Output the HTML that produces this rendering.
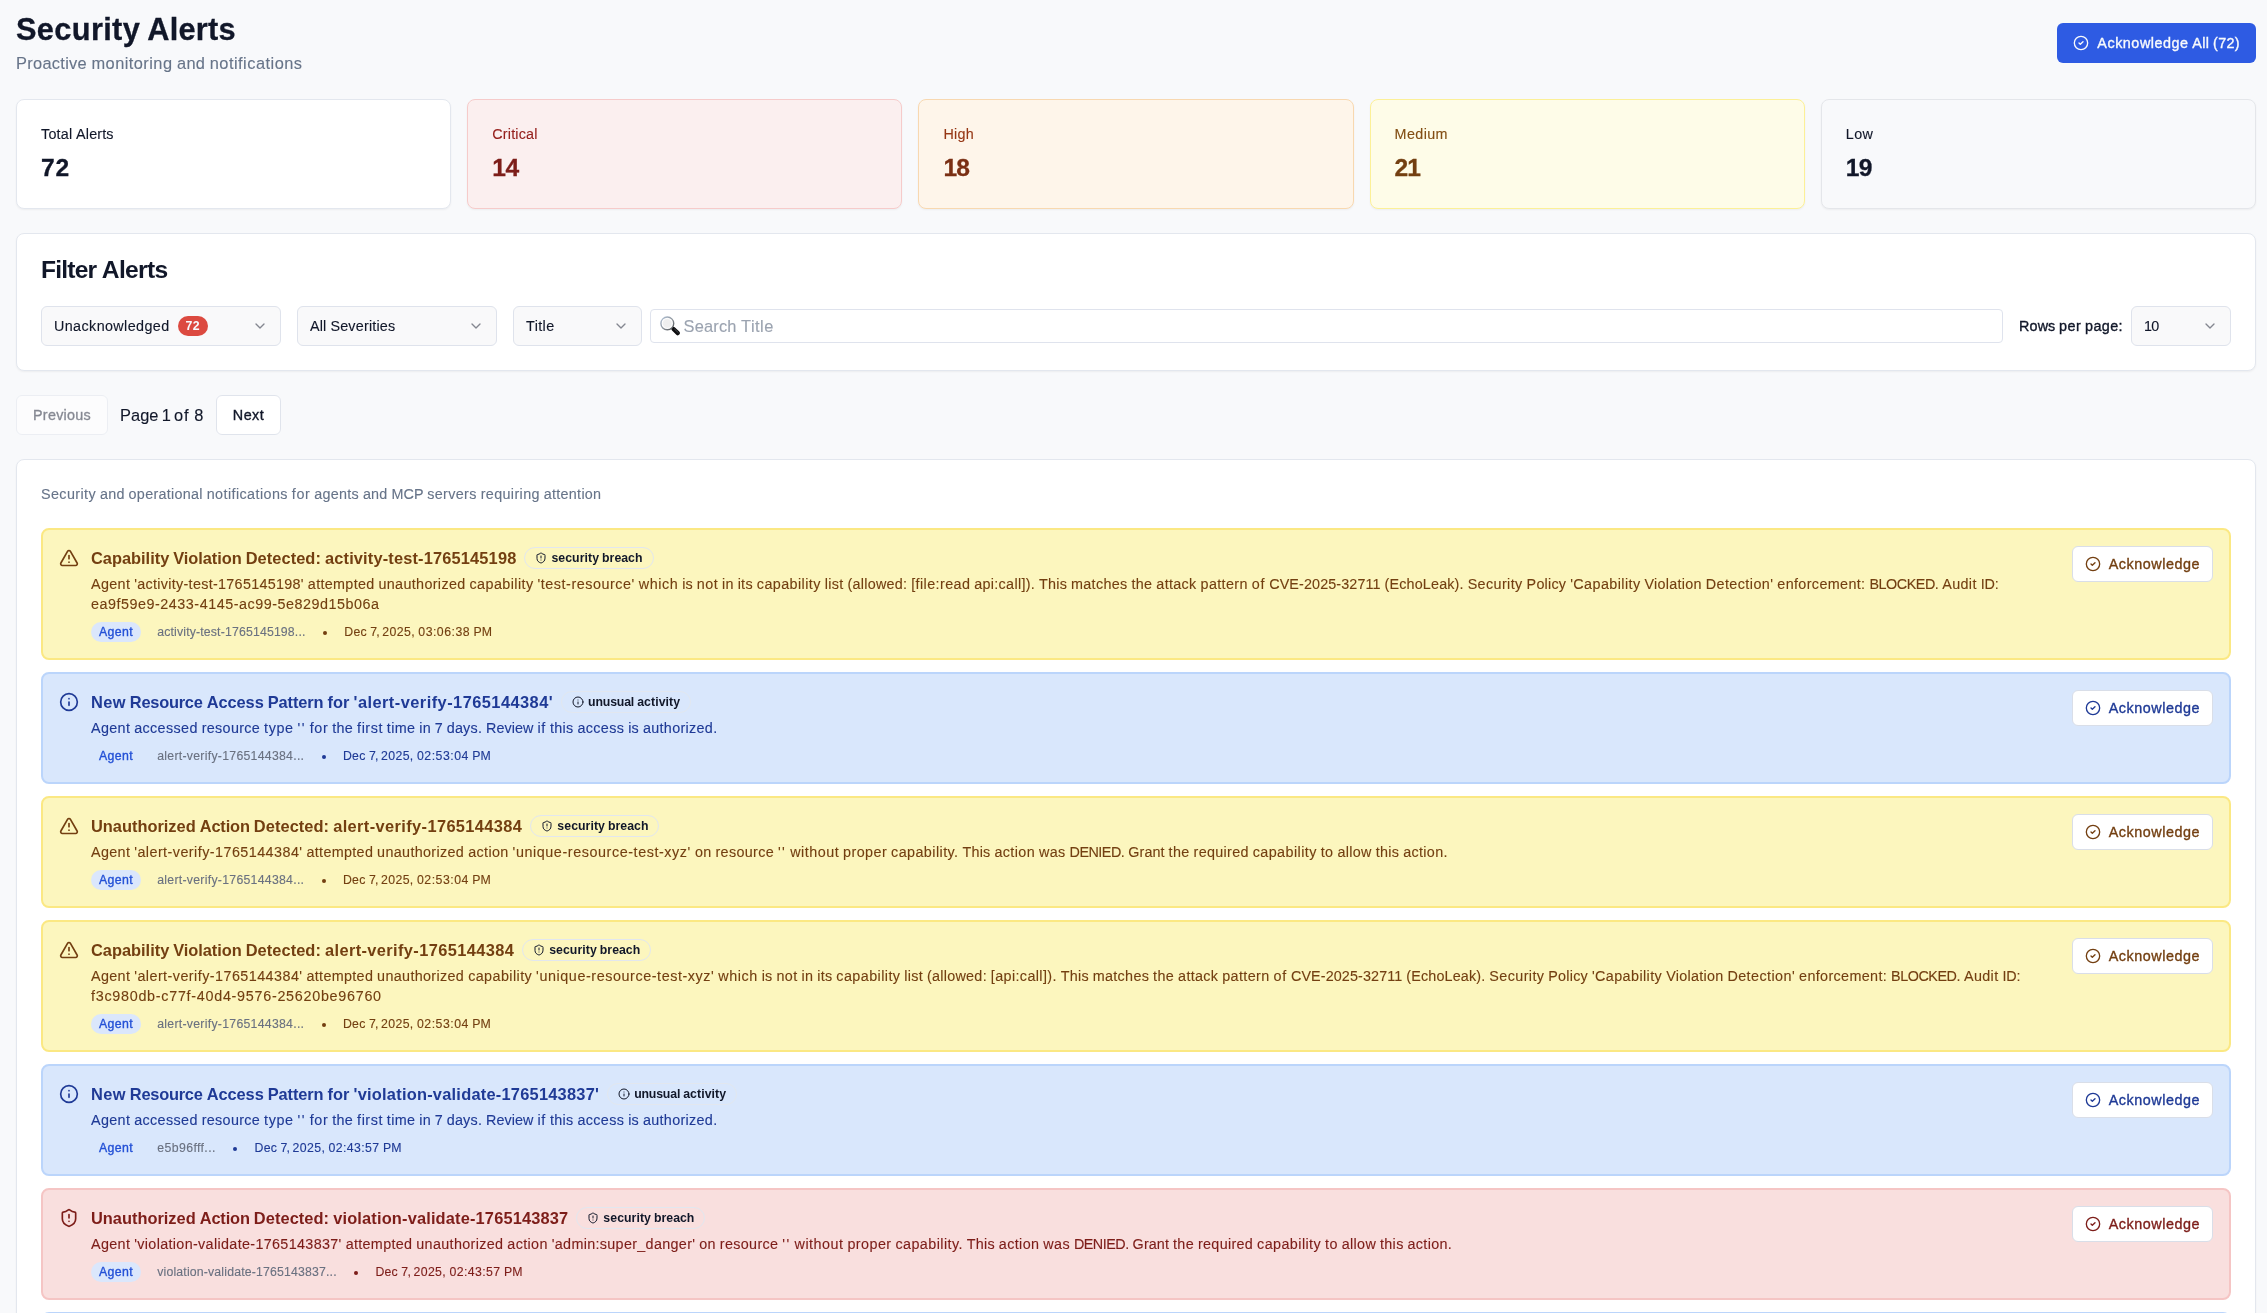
<!DOCTYPE html><html><head><meta charset="utf-8"><title>Security Alerts</title><style>
*{box-sizing:border-box;margin:0;padding:0}
html,body{width:2267px;height:1313px;overflow:hidden}
body{background:#f8f9fb;font-family:"Liberation Sans", sans-serif;color:#111729;font-size:14.35px;line-height:20px;-webkit-font-smoothing:antialiased}
.tx{white-space:pre}
.dy1{position:relative;top:1px}.dy2{position:relative;top:2px}.dym1{position:relative;top:-1px}
.dotw{margin-right:16px;line-height:16px;white-space:nowrap}
.dotw i{display:inline-block;width:3.88px;height:3.88px;border-radius:50%;background:currentColor;vertical-align:1.15px;margin:0 1.435px}
body{-webkit-text-stroke:0.12px currentColor}
.m5{-webkit-text-stroke:0.35px currentColor}
h1,.stat .nm{-webkit-text-stroke:0.3px currentColor}.ftitle,.bdg72,.al .ttl,.tag{-webkit-text-stroke:0.0px currentColor}
.page{position:absolute;left:16px;top:11px;width:2240px;will-change:transform}
.header{display:flex;justify-content:space-between;align-items:center;height:64px}
h1{font-size:30.75px;line-height:36px;font-weight:700;color:#111729}
.sub{font-size:16.4px;line-height:24px;color:#677489;margin-top:4px}
.btnp{display:flex;align-items:center;height:40px;padding:0 16px;border-radius:6px;background:#2e5be3;color:#f8fafc;font-size:14.35px;font-weight:400}
.btnp svg{margin-right:8px}
.stats{display:grid;grid-template-columns:repeat(5,1fr);gap:16px;margin-top:24px}
.card{background:#fff;border:1px solid #e3e7ee;border-radius:8px;box-shadow:0 1px 2px 0 rgba(0,0,0,0.05)}
.stat{padding:24px;height:110px}
.stat .lb{font-size:14.35px;line-height:20px;font-weight:400;display:block}
.stat .nm{font-size:24.6px;line-height:32px;font-weight:700;display:block;margin-top:8px}
.s-crit{background:#fbefef;border-color:#f6cbca}.s-crit .lb{color:#951f1c}.s-crit .nm{color:#7d1d19}
.s-high{background:#fef5ea;border-color:#f8d8b0}.s-high .lb{color:#963716}.s-high .nm{color:#7a2f14}
.s-med{background:#fefce8;border-color:#fcf097}.s-med .lb{color:#834e14}.s-med .nm{color:#733f11}
.s-low{background:#f8f9fb;border-color:#e4e6ea}
.filter{margin-top:24px;height:138px;padding:24px;position:relative}
.ftitle{font-size:24.6px;line-height:24px;font-weight:700;letter-spacing:0;display:block}
.frow{position:absolute;left:24px;top:72px;right:24px;height:40px;display:flex;align-items:center}
.sel{height:40px;border:1px solid #dfe3ec;border-radius:6px;background:#f9f9fa;display:flex;align-items:center;justify-content:space-between;padding:0 12px;font-size:14.35px;line-height:20px}
.sel svg{opacity:.5}
.sel .l{display:flex;align-items:center}
.bdg72{margin-left:8px;height:20px;padding:0 8px;border-radius:10px;background:#dc4a40;color:#f8fafc;font-size:12.3px;line-height:20px;font-weight:700}
.search{height:34px;border:1px solid #dfe3ed;border-radius:4px;background:#fff;margin-left:8px;flex:1;display:flex;align-items:center;padding-left:9px;font-size:16.4px;color:#9ba3b0}
.rpp{margin-left:16px;font-weight:400;margin-right:8px}
.pager{margin-top:24px;height:40px;display:flex;align-items:center}
.btno{height:40px;padding:0 16px;border:1px solid #e0e4ec;border-radius:6px;background:#fff;display:flex;align-items:center;font-size:14.35px;font-weight:400}
.btno.dis{opacity:.5}
.pg{font-size:16.4px;line-height:24px;margin:0 12px}
.list{margin-top:24px;padding:24px}
.ldesc{display:block;color:#677489;font-size:14.35px;line-height:20px}
.alerts{margin-top:24px}
.al{position:relative;border:2px solid;border-radius:8px;padding:16px;display:flex;margin-bottom:12px}
.al .ic{flex:none;width:20px;height:20px;margin-top:2px;margin-right:12px}
.al .body{flex:1;min-width:0}
.al .trow{display:flex;align-items:center;height:24px}
.al .ttl{font-size:16.4px;line-height:24px;font-weight:700}
.tag{margin-left:8px;height:22px;border:1px solid #e2e7ef;border-radius:11px;padding:0 10px;display:flex;align-items:center;font-size:12.3px;line-height:16px;font-weight:700;color:#111729}
.tag svg{margin-right:4px}
.al .desc{margin-top:4px;font-size:14.35px;line-height:20px}
.al .desc .tx{display:block}
.al .meta{margin-top:8px;height:20px;display:flex;align-items:center;font-size:12.3px;line-height:16px}
.al .agent{height:20px;padding:0 8px;border-radius:10px;font-weight:400;color:#2350d6;display:flex;align-items:center;margin-right:16px}
.al .agent.bg{background:#dbe7fc}
.al .aid{color:#6a7180;margin-right:16px}
.al .dot{margin-right:16px}
.ack{flex:none;margin-left:16px;height:36px;padding:0 12px;border:1px solid #d9dee8;border-radius:6px;background:#fff;display:flex;align-items:center;font-size:14.35px;font-weight:400}
.ack svg{margin-right:8px}
.a-y{background:#fcf6be;border-color:#fbe883;color:#733f11}
.a-b{background:#d9e7fc;border-color:#bbd5fb;color:#1f3a96}
.a-r{background:#f9dfde;border-color:#f5c5c4;color:#7d1d19}
</style></head><body><div class="page">
<div class="header"><div><h1><span class="tx dy1" id="t1"><span style="letter-spacing:0.346px;word-spacing:-1.799px">Security </span><span style="letter-spacing:0.268px">Alerts</span></span></h1><p class="sub"><span class="tx" id="t2"><span style="letter-spacing:0.293px;word-spacing:-0.340px">Proactive </span><span style="letter-spacing:0.450px;word-spacing:-0.528px">monitoring </span><span style="letter-spacing:0.297px;word-spacing:-0.360px">and </span><span style="letter-spacing:0.483px">notifications</span></span></p></div><div class="btnp m5"><svg class="" width="16" height="16" viewBox="0 0 24 24" fill="none" stroke="currentColor" stroke-width="2" stroke-linecap="round" stroke-linejoin="round" ><circle cx="12" cy="12" r="10"/><path d="m9 12 2 2 4-4"/></svg><span class="tx" id="t3"><span style="letter-spacing:0.541px;word-spacing:-0.806px">Acknowledge </span><span style="letter-spacing:0.349px;word-spacing:-0.615px">All </span><span style="letter-spacing:0.363px">(72)</span></span></div></div>
<div class="stats"><div class="card stat "><span class="tx lb" id="t4"><span style="letter-spacing:0.209px;word-spacing:-0.443px">Total </span><span style="letter-spacing:0.133px">Alerts</span></span><span class="tx nm" id="t5" style="letter-spacing:0.859px">72</span></div><div class="card stat s-crit"><span class="tx lb" id="t6" style="letter-spacing:0.209px">Critical</span><span class="tx nm" id="t7" style="letter-spacing:-0.391px">14</span></div><div class="card stat s-high"><span class="tx lb" id="t8" style="letter-spacing:0.293px">High</span><span class="tx nm" id="t9" style="letter-spacing:-0.695px">18</span></div><div class="card stat s-med"><span class="tx lb" id="t10" style="letter-spacing:0.385px">Medium</span><span class="tx nm" id="t11" style="letter-spacing:-0.945px">21</span></div><div class="card stat s-low"><span class="tx lb" id="t12" style="letter-spacing:0.396px">Low</span><span class="tx nm" id="t13" style="letter-spacing:-0.711px">19</span></div></div>
<div class="card filter"><span class="tx ftitle" id="t14"><span style="letter-spacing:-0.792px;word-spacing:-0.615px">Filter </span><span style="letter-spacing:-0.656px">Alerts</span></span><div class="frow"><div class="sel" style="width:240px"><span class="l"><span class="tx" id="t15" style="letter-spacing:0.394px">Unacknowledged</span><span class="bdg72"><span class="tx" id="t16" style="letter-spacing:0.352px">72</span></span></span><svg class="" width="16" height="16" viewBox="0 0 24 24" fill="none" stroke="currentColor" stroke-width="2" stroke-linecap="round" stroke-linejoin="round" ><path d="m6 9 6 6 6-6"/></svg></div><div class="sel" style="width:200px;margin-left:16px"><span class="tx" id="t17"><span style="letter-spacing:0.167px;word-spacing:-0.230px">All </span><span style="letter-spacing:0.206px">Severities</span></span><svg class="" width="16" height="16" viewBox="0 0 24 24" fill="none" stroke="currentColor" stroke-width="2" stroke-linecap="round" stroke-linejoin="round" ><path d="m6 9 6 6 6-6"/></svg></div><div class="sel" style="width:128.5px;margin-left:16px"><span class="tx" id="t18" style="letter-spacing:0.397px">Title</span><svg class="" width="16" height="16" viewBox="0 0 24 24" fill="none" stroke="currentColor" stroke-width="2" stroke-linecap="round" stroke-linejoin="round" ><path d="m6 9 6 6 6-6"/></svg></div><div class="search"><svg width="20" height="20" viewBox="0 0 20 20" style="margin-right:4px;flex:none;overflow:visible"><defs><linearGradient id="mgr" x1="0" y1="0" x2="1" y2="1"><stop offset="0" stop-color="#b4c4d8"/><stop offset="0.55" stop-color="#8b9299"/><stop offset="1" stop-color="#4a4d50"/></linearGradient><radialGradient id="mgl" cx="0.5" cy="0.5" r="0.5"><stop offset="0" stop-color="#eeeeee"/><stop offset="0.62" stop-color="#f0f0f0"/><stop offset="0.8" stop-color="#ffffff"/><stop offset="1" stop-color="#ffffff"/></radialGradient></defs><line x1="13.5" y1="13.0" x2="17.8" y2="17.1" stroke="#0d0d0f" stroke-width="4.3" stroke-linecap="round"/><line x1="14.6" y1="13.2" x2="18.2" y2="16.6" stroke="#4a4f55" stroke-width="0.9" stroke-linecap="round"/><circle cx="7.3" cy="7.4" r="6.4" fill="url(#mgl)" stroke="url(#mgr)" stroke-width="1.4"/></svg><span class="tx" id="t19"><span style="letter-spacing:0.193px;word-spacing:-0.256px">Search </span><span style="letter-spacing:0.456px">Title</span></span></div><span class="rpp m5"><span class="tx" id="t20"><span style="letter-spacing:0.098px;word-spacing:-0.379px">Rows </span><span style="letter-spacing:0.526px;word-spacing:-0.792px">per </span><span style="letter-spacing:0.400px">page:</span></span></span><div class="sel" style="width:100px"><span class="tx" id="t21" style="letter-spacing:-0.719px">10</span><svg class="" width="16" height="16" viewBox="0 0 24 24" fill="none" stroke="currentColor" stroke-width="2" stroke-linecap="round" stroke-linejoin="round" ><path d="m6 9 6 6 6-6"/></svg></div></div></div>
<div class="pager"><div class="btno dis m5"><span class="tx" id="t22" style="letter-spacing:0.283px">Previous</span></div><span class="pg"><span class="tx" id="t23"><span style="letter-spacing:0.016px;word-spacing:-0.078px">Page </span><span style="margin-left:-1.304px;letter-spacing:-1.304px;word-spacing:1.243px">1 </span><span style="letter-spacing:0.930px;word-spacing:-1.008px">of </span><span style="margin-left:0.391px;letter-spacing:0.391px">8</span></span></span><div class="btno m5"><span class="tx" id="t24" style="letter-spacing:0.457px">Next</span></div></div>
<div class="card list"><span class="tx ldesc" id="t25"><span style="letter-spacing:0.402px;word-spacing:-0.465px">Security </span><span style="letter-spacing:0.260px;word-spacing:-0.323px">and </span><span style="letter-spacing:0.290px;word-spacing:-0.353px">operational </span><span style="letter-spacing:0.421px;word-spacing:-0.484px">notifications </span><span style="letter-spacing:0.568px;word-spacing:-0.631px">for </span><span style="letter-spacing:0.276px;word-spacing:-0.339px">agents </span><span style="letter-spacing:0.260px;word-spacing:-0.323px">and </span><span style="letter-spacing:0.068px;word-spacing:-0.131px">MCP </span><span style="letter-spacing:0.350px;word-spacing:-0.413px">servers </span><span style="letter-spacing:0.373px;word-spacing:-0.435px">requiring </span><span style="letter-spacing:0.288px">attention</span></span><div class="alerts">
<div class="al a-y"><svg class="ic" width="20" height="20" viewBox="0 0 24 24" fill="none" stroke="currentColor" stroke-width="2" stroke-linecap="round" stroke-linejoin="round" ><path d="m21.73 18-8-14a2 2 0 0 0-3.48 0l-8 14A2 2 0 0 0 4 21h16a2 2 0 0 0 1.73-3"/><path d="M12 9v4"/><path d="M12 17h.01"/></svg><div class="body"><div class="trow"><span class="tx ttl" id="t28"><span style="letter-spacing:-0.006px;word-spacing:-0.540px">Capability </span><span style="letter-spacing:-0.066px;word-spacing:-0.466px">Violation </span><span style="letter-spacing:0.073px;word-spacing:-0.619px">Detected: </span><span style="letter-spacing:0.156px">activity-test-1765145198</span></span><span class="tag"><svg class="" width="12" height="12" viewBox="0 0 24 24" fill="none" stroke="currentColor" stroke-width="2" stroke-linecap="round" stroke-linejoin="round" ><path d="M20 13c0 5-3.5 7.500-7.660 8.950a1 1 0 0 1-.670-.010C7.500 20.500 4 18 4 13V6a1 1 0 0 1 1-1c2 0 4.500-1.200 6.240-2.720a1.170 1.170 0 0 1 1.520 0C14.510 3.810 17 5 19 5a1 1 0 0 1 1 1z"/><path d="M12 8v4"/><path d="M12 16h.01"/></svg><span class="tx" id="t29"><span style="letter-spacing:0.055px;word-spacing:-0.461px">security </span><span style="letter-spacing:0.018px">breach</span></span></span></div><div class="desc"><span class="tx" id="t26"><span style="letter-spacing:0.356px;word-spacing:-0.419px">Agent </span><span style="letter-spacing:0.306px;word-spacing:-0.369px">'activity-test-1765145198' </span><span style="letter-spacing:0.327px;word-spacing:-0.405px">attempted </span><span style="letter-spacing:0.347px;word-spacing:-0.410px">unauthorized </span><span style="letter-spacing:0.423px;word-spacing:-0.485px">capability </span><span style="letter-spacing:0.548px;word-spacing:-0.611px">'test-resource' </span><span style="letter-spacing:0.547px;word-spacing:-0.610px">which </span><span style="letter-spacing:0.219px;word-spacing:-0.297px">is </span><span style="letter-spacing:0.432px;word-spacing:-0.495px">not </span><span style="letter-spacing:0.258px;word-spacing:-0.321px">in </span><span style="letter-spacing:0.292px;word-spacing:-0.355px">its </span><span style="letter-spacing:0.424px;word-spacing:-0.486px">capability </span><span style="letter-spacing:0.305px;word-spacing:-0.368px">list </span><span style="letter-spacing:0.274px;word-spacing:-0.337px">(allowed: </span><span style="letter-spacing:0.403px;word-spacing:-0.465px">[file:read </span><span style="letter-spacing:0.317px;word-spacing:-0.381px">api:call]). </span><span style="letter-spacing:0.250px;word-spacing:-0.312px">This </span><span style="letter-spacing:0.312px;word-spacing:-0.375px">matches </span><span style="letter-spacing:0.365px;word-spacing:-0.427px">the </span><span style="letter-spacing:0.336px;word-spacing:-0.399px">attack </span><span style="letter-spacing:0.362px;word-spacing:-0.424px">pattern </span><span style="letter-spacing:0.805px;word-spacing:-0.867px">of </span><span style="letter-spacing:0.121px;word-spacing:-0.183px">CVE-2025-32711 </span><span style="letter-spacing:0.161px;word-spacing:-0.223px">(EchoLeak). </span><span style="letter-spacing:0.404px;word-spacing:-0.467px">Security </span><span style="letter-spacing:0.229px;word-spacing:-0.292px">Policy </span><span style="letter-spacing:0.419px;word-spacing:-0.481px">'Capability </span><span style="letter-spacing:0.285px;word-spacing:-0.347px">Violation </span><span style="letter-spacing:0.438px;word-spacing:-0.500px">Detection' </span><span style="letter-spacing:0.367px;word-spacing:-0.430px">enforcement: </span><span style="letter-spacing:-0.447px;word-spacing:0.385px">BLOCKED. </span><span style="letter-spacing:0.359px;word-spacing:-0.422px">Audit </span><span style="letter-spacing:-0.146px">ID:</span></span><span class="tx" id="t27" style="letter-spacing:0.526px">ea9f59e9-2433-4145-ac99-5e829d15b06a</span></div><div class="meta"><span class="agent m5 bg"><span class="tx" id="t30" style="letter-spacing:0.412px">Agent</span></span><span class="tx aid" id="t31" style="letter-spacing:0.153px">activity-test-1765145198...</span><span class="dotw"><i></i></span><span class="tx dt" id="t33"><span style="letter-spacing:0.214px;word-spacing:-0.276px">Dec </span><span style="letter-spacing:-0.750px;word-spacing:0.703px">7, </span><span style="letter-spacing:0.375px;word-spacing:-0.438px">2025, </span><span style="letter-spacing:0.484px;word-spacing:-0.516px">03:06:38 </span><span style="letter-spacing:0.031px">PM</span></span></div></div><div class="ack m5"><svg class="" width="16" height="16" viewBox="0 0 24 24" fill="none" stroke="currentColor" stroke-width="2" stroke-linecap="round" stroke-linejoin="round" ><circle cx="12" cy="12" r="10"/><path d="m9 12 2 2 4-4"/></svg><span class="tx" id="t34" style="letter-spacing:0.541px">Acknowledge</span></div></div>
<div class="al a-b"><svg class="ic" width="20" height="20" viewBox="0 0 24 24" fill="none" stroke="currentColor" stroke-width="2" stroke-linecap="round" stroke-linejoin="round" ><circle cx="12" cy="12" r="10"/><path d="M12 16v-4"/><path d="M12 8h.01"/></svg><div class="body"><div class="trow"><span class="tx ttl" id="t36"><span style="letter-spacing:0.365px;word-spacing:-0.896px">New </span><span style="letter-spacing:-0.238px;word-spacing:-0.293px">Resource </span><span style="letter-spacing:-0.054px;word-spacing:-0.492px">Access </span><span style="letter-spacing:-0.100px;word-spacing:-0.431px">Pattern </span><span style="letter-spacing:0.026px;word-spacing:-0.542px">for </span><span style="letter-spacing:0.454px">'alert-verify-1765144384'</span></span><span class="tag"><svg class="" width="12" height="12" viewBox="0 0 24 24" fill="none" stroke="currentColor" stroke-width="2" stroke-linecap="round" stroke-linejoin="round" ><circle cx="12" cy="12" r="10"/><path d="M12 16v-4"/><path d="M12 8h.01"/></svg><span class="tx" id="t37"><span style="letter-spacing:-0.161px;word-spacing:-0.246px">unusual </span><span style="letter-spacing:0.076px">activity</span></span></span></div><div class="desc"><span class="tx" id="t35"><span style="letter-spacing:0.356px;word-spacing:-0.419px">Agent </span><span style="letter-spacing:0.367px;word-spacing:-0.430px">accessed </span><span style="letter-spacing:0.334px;word-spacing:-0.397px">resource </span><span style="letter-spacing:0.586px;word-spacing:-0.649px">type </span><span style="letter-spacing:1.461px;word-spacing:-1.524px">'' </span><span style="letter-spacing:0.568px;word-spacing:-0.630px">for </span><span style="letter-spacing:0.359px;word-spacing:-0.422px">the </span><span style="letter-spacing:0.544px;word-spacing:-0.606px">first </span><span style="letter-spacing:0.328px;word-spacing:-0.391px">time </span><span style="letter-spacing:0.250px;word-spacing:-0.313px">in </span><span style="letter-spacing:-0.046px;word-spacing:-0.015px">7 </span><span style="letter-spacing:0.247px;word-spacing:-0.310px">days. </span><span style="letter-spacing:0.052px;word-spacing:-0.114px">Review </span><span style="letter-spacing:0.703px;word-spacing:-0.781px">if </span><span style="letter-spacing:0.332px;word-spacing:-0.395px">this </span><span style="letter-spacing:0.359px;word-spacing:-0.421px">access </span><span style="letter-spacing:0.219px;word-spacing:-0.297px">is </span><span style="letter-spacing:0.329px">authorized.</span></span></div><div class="meta"><span class="agent m5"><span class="tx" id="t38" style="letter-spacing:0.412px">Agent</span></span><span class="tx aid" id="t39" style="letter-spacing:0.267px">alert-verify-1765144384...</span><span class="dotw"><i></i></span><span class="tx dt" id="t41"><span style="letter-spacing:0.214px;word-spacing:-0.276px">Dec </span><span style="letter-spacing:-0.750px;word-spacing:0.703px">7, </span><span style="letter-spacing:0.375px;word-spacing:-0.438px">2025, </span><span style="letter-spacing:0.496px;word-spacing:-0.559px">02:53:04 </span><span style="letter-spacing:0.031px">PM</span></span></div></div><div class="ack m5"><svg class="" width="16" height="16" viewBox="0 0 24 24" fill="none" stroke="currentColor" stroke-width="2" stroke-linecap="round" stroke-linejoin="round" ><circle cx="12" cy="12" r="10"/><path d="m9 12 2 2 4-4"/></svg><span class="tx" id="t42" style="letter-spacing:0.541px">Acknowledge</span></div></div>
<div class="al a-y"><svg class="ic" width="20" height="20" viewBox="0 0 24 24" fill="none" stroke="currentColor" stroke-width="2" stroke-linecap="round" stroke-linejoin="round" ><path d="m21.73 18-8-14a2 2 0 0 0-3.48 0l-8 14A2 2 0 0 0 4 21h16a2 2 0 0 0 1.73-3"/><path d="M12 9v4"/><path d="M12 17h.01"/></svg><div class="body"><div class="trow"><span class="tx ttl" id="t44"><span style="letter-spacing:-0.004px;word-spacing:-0.527px">Unauthorized </span><span style="letter-spacing:-0.151px;word-spacing:-0.381px">Action </span><span style="letter-spacing:0.073px;word-spacing:-0.619px">Detected: </span><span style="letter-spacing:0.380px">alert-verify-1765144384</span></span><span class="tag"><svg class="" width="12" height="12" viewBox="0 0 24 24" fill="none" stroke="currentColor" stroke-width="2" stroke-linecap="round" stroke-linejoin="round" ><path d="M20 13c0 5-3.5 7.500-7.660 8.950a1 1 0 0 1-.670-.010C7.500 20.500 4 18 4 13V6a1 1 0 0 1 1-1c2 0 4.500-1.200 6.240-2.720a1.170 1.170 0 0 1 1.520 0C14.510 3.810 17 5 19 5a1 1 0 0 1 1 1z"/><path d="M12 8v4"/><path d="M12 16h.01"/></svg><span class="tx" id="t45"><span style="letter-spacing:0.055px;word-spacing:-0.461px">security </span><span style="letter-spacing:0.018px">breach</span></span></span></div><div class="desc"><span class="tx" id="t43"><span style="letter-spacing:0.356px;word-spacing:-0.419px">Agent </span><span style="letter-spacing:0.455px;word-spacing:-0.518px">'alert-verify-1765144384' </span><span style="letter-spacing:0.327px;word-spacing:-0.405px">attempted </span><span style="letter-spacing:0.345px;word-spacing:-0.408px">unauthorized </span><span style="letter-spacing:0.372px;word-spacing:-0.435px">action </span><span style="letter-spacing:0.579px;word-spacing:-0.642px">'unique-resource-test-xyz' </span><span style="letter-spacing:0.352px;word-spacing:-0.414px">on </span><span style="letter-spacing:0.334px;word-spacing:-0.397px">resource </span><span style="letter-spacing:1.461px;word-spacing:-1.524px">'' </span><span style="letter-spacing:0.504px;word-spacing:-0.567px">without </span><span style="letter-spacing:0.425px;word-spacing:-0.487px">proper </span><span style="letter-spacing:0.431px;word-spacing:-0.495px">capability. </span><span style="letter-spacing:0.250px;word-spacing:-0.313px">This </span><span style="letter-spacing:0.372px;word-spacing:-0.435px">action </span><span style="letter-spacing:0.401px;word-spacing:-0.464px">was </span><span style="letter-spacing:-0.487px;word-spacing:0.424px">DENIED. </span><span style="letter-spacing:0.112px;word-spacing:-0.175px">Grant </span><span style="letter-spacing:0.365px;word-spacing:-0.427px">the </span><span style="letter-spacing:0.324px;word-spacing:-0.387px">required </span><span style="letter-spacing:0.423px;word-spacing:-0.470px">capability </span><span style="letter-spacing:0.438px;word-spacing:-0.500px">to </span><span style="letter-spacing:0.315px;word-spacing:-0.378px">allow </span><span style="letter-spacing:0.328px;word-spacing:-0.391px">this </span><span style="letter-spacing:0.326px">action.</span></span></div><div class="meta"><span class="agent m5 bg"><span class="tx" id="t46" style="letter-spacing:0.412px">Agent</span></span><span class="tx aid" id="t47" style="letter-spacing:0.267px">alert-verify-1765144384...</span><span class="dotw"><i></i></span><span class="tx dt" id="t49"><span style="letter-spacing:0.214px;word-spacing:-0.276px">Dec </span><span style="letter-spacing:-0.750px;word-spacing:0.703px">7, </span><span style="letter-spacing:0.375px;word-spacing:-0.438px">2025, </span><span style="letter-spacing:0.496px;word-spacing:-0.559px">02:53:04 </span><span style="letter-spacing:0.031px">PM</span></span></div></div><div class="ack m5"><svg class="" width="16" height="16" viewBox="0 0 24 24" fill="none" stroke="currentColor" stroke-width="2" stroke-linecap="round" stroke-linejoin="round" ><circle cx="12" cy="12" r="10"/><path d="m9 12 2 2 4-4"/></svg><span class="tx" id="t50" style="letter-spacing:0.541px">Acknowledge</span></div></div>
<div class="al a-y"><svg class="ic" width="20" height="20" viewBox="0 0 24 24" fill="none" stroke="currentColor" stroke-width="2" stroke-linecap="round" stroke-linejoin="round" ><path d="m21.73 18-8-14a2 2 0 0 0-3.48 0l-8 14A2 2 0 0 0 4 21h16a2 2 0 0 0 1.73-3"/><path d="M12 9v4"/><path d="M12 17h.01"/></svg><div class="body"><div class="trow"><span class="tx ttl" id="t53"><span style="letter-spacing:-0.006px;word-spacing:-0.540px">Capability </span><span style="letter-spacing:-0.066px;word-spacing:-0.466px">Violation </span><span style="letter-spacing:0.073px;word-spacing:-0.619px">Detected: </span><span style="letter-spacing:0.380px">alert-verify-1765144384</span></span><span class="tag"><svg class="" width="12" height="12" viewBox="0 0 24 24" fill="none" stroke="currentColor" stroke-width="2" stroke-linecap="round" stroke-linejoin="round" ><path d="M20 13c0 5-3.5 7.500-7.660 8.950a1 1 0 0 1-.670-.010C7.500 20.500 4 18 4 13V6a1 1 0 0 1 1-1c2 0 4.500-1.200 6.240-2.720a1.170 1.170 0 0 1 1.520 0C14.510 3.810 17 5 19 5a1 1 0 0 1 1 1z"/><path d="M12 8v4"/><path d="M12 16h.01"/></svg><span class="tx" id="t54"><span style="letter-spacing:0.055px;word-spacing:-0.461px">security </span><span style="letter-spacing:0.018px">breach</span></span></span></div><div class="desc"><span class="tx" id="t51"><span style="letter-spacing:0.356px;word-spacing:-0.419px">Agent </span><span style="letter-spacing:0.455px;word-spacing:-0.518px">'alert-verify-1765144384' </span><span style="letter-spacing:0.327px;word-spacing:-0.405px">attempted </span><span style="letter-spacing:0.345px;word-spacing:-0.408px">unauthorized </span><span style="letter-spacing:0.423px;word-spacing:-0.485px">capability </span><span style="letter-spacing:0.578px;word-spacing:-0.640px">'unique-resource-test-xyz' </span><span style="letter-spacing:0.547px;word-spacing:-0.610px">which </span><span style="letter-spacing:0.219px;word-spacing:-0.297px">is </span><span style="letter-spacing:0.438px;word-spacing:-0.500px">not </span><span style="letter-spacing:0.250px;word-spacing:-0.313px">in </span><span style="letter-spacing:0.292px;word-spacing:-0.355px">its </span><span style="letter-spacing:0.423px;word-spacing:-0.486px">capability </span><span style="letter-spacing:0.305px;word-spacing:-0.367px">list </span><span style="letter-spacing:0.276px;word-spacing:-0.339px">(allowed: </span><span style="letter-spacing:0.384px;word-spacing:-0.447px">[api:call]). </span><span style="letter-spacing:0.250px;word-spacing:-0.312px">This </span><span style="letter-spacing:0.312px;word-spacing:-0.375px">matches </span><span style="letter-spacing:0.365px;word-spacing:-0.427px">the </span><span style="letter-spacing:0.336px;word-spacing:-0.399px">attack </span><span style="letter-spacing:0.361px;word-spacing:-0.424px">pattern </span><span style="letter-spacing:0.813px;word-spacing:-0.875px">of </span><span style="letter-spacing:0.121px;word-spacing:-0.183px">CVE-2025-32711 </span><span style="letter-spacing:0.161px;word-spacing:-0.223px">(EchoLeak). </span><span style="letter-spacing:0.402px;word-spacing:-0.465px">Security </span><span style="letter-spacing:0.232px;word-spacing:-0.295px">Policy </span><span style="letter-spacing:0.419px;word-spacing:-0.481px">'Capability </span><span style="letter-spacing:0.285px;word-spacing:-0.347px">Violation </span><span style="letter-spacing:0.438px;word-spacing:-0.500px">Detection' </span><span style="letter-spacing:0.367px;word-spacing:-0.430px">enforcement: </span><span style="letter-spacing:-0.447px;word-spacing:0.385px">BLOCKED. </span><span style="letter-spacing:0.359px;word-spacing:-0.422px">Audit </span><span style="letter-spacing:-0.146px">ID:</span></span><span class="tx" id="t52" style="letter-spacing:0.723px">f3c980db-c77f-40d4-9576-25620be96760</span></div><div class="meta"><span class="agent m5 bg"><span class="tx" id="t55" style="letter-spacing:0.412px">Agent</span></span><span class="tx aid" id="t56" style="letter-spacing:0.267px">alert-verify-1765144384...</span><span class="dotw"><i></i></span><span class="tx dt" id="t58"><span style="letter-spacing:0.214px;word-spacing:-0.276px">Dec </span><span style="letter-spacing:-0.750px;word-spacing:0.703px">7, </span><span style="letter-spacing:0.375px;word-spacing:-0.438px">2025, </span><span style="letter-spacing:0.496px;word-spacing:-0.559px">02:53:04 </span><span style="letter-spacing:0.031px">PM</span></span></div></div><div class="ack m5"><svg class="" width="16" height="16" viewBox="0 0 24 24" fill="none" stroke="currentColor" stroke-width="2" stroke-linecap="round" stroke-linejoin="round" ><circle cx="12" cy="12" r="10"/><path d="m9 12 2 2 4-4"/></svg><span class="tx" id="t59" style="letter-spacing:0.541px">Acknowledge</span></div></div>
<div class="al a-b"><svg class="ic" width="20" height="20" viewBox="0 0 24 24" fill="none" stroke="currentColor" stroke-width="2" stroke-linecap="round" stroke-linejoin="round" ><circle cx="12" cy="12" r="10"/><path d="M12 16v-4"/><path d="M12 8h.01"/></svg><div class="body"><div class="trow"><span class="tx ttl" id="t61"><span style="letter-spacing:0.365px;word-spacing:-0.896px">New </span><span style="letter-spacing:-0.238px;word-spacing:-0.293px">Resource </span><span style="letter-spacing:-0.054px;word-spacing:-0.492px">Access </span><span style="letter-spacing:-0.100px;word-spacing:-0.431px">Pattern </span><span style="letter-spacing:0.026px;word-spacing:-0.542px">for </span><span style="letter-spacing:0.235px">'violation-validate-1765143837'</span></span><span class="tag"><svg class="" width="12" height="12" viewBox="0 0 24 24" fill="none" stroke="currentColor" stroke-width="2" stroke-linecap="round" stroke-linejoin="round" ><circle cx="12" cy="12" r="10"/><path d="M12 16v-4"/><path d="M12 8h.01"/></svg><span class="tx" id="t62"><span style="letter-spacing:-0.161px;word-spacing:-0.246px">unusual </span><span style="letter-spacing:0.076px">activity</span></span></span></div><div class="desc"><span class="tx" id="t60"><span style="letter-spacing:0.356px;word-spacing:-0.419px">Agent </span><span style="letter-spacing:0.367px;word-spacing:-0.430px">accessed </span><span style="letter-spacing:0.334px;word-spacing:-0.397px">resource </span><span style="letter-spacing:0.586px;word-spacing:-0.649px">type </span><span style="letter-spacing:1.461px;word-spacing:-1.524px">'' </span><span style="letter-spacing:0.568px;word-spacing:-0.630px">for </span><span style="letter-spacing:0.359px;word-spacing:-0.422px">the </span><span style="letter-spacing:0.544px;word-spacing:-0.606px">first </span><span style="letter-spacing:0.328px;word-spacing:-0.391px">time </span><span style="letter-spacing:0.250px;word-spacing:-0.313px">in </span><span style="letter-spacing:-0.046px;word-spacing:-0.015px">7 </span><span style="letter-spacing:0.247px;word-spacing:-0.310px">days. </span><span style="letter-spacing:0.052px;word-spacing:-0.114px">Review </span><span style="letter-spacing:0.703px;word-spacing:-0.781px">if </span><span style="letter-spacing:0.332px;word-spacing:-0.395px">this </span><span style="letter-spacing:0.359px;word-spacing:-0.421px">access </span><span style="letter-spacing:0.219px;word-spacing:-0.297px">is </span><span style="letter-spacing:0.329px">authorized.</span></span></div><div class="meta"><span class="agent m5"><span class="tx" id="t63" style="letter-spacing:0.412px">Agent</span></span><span class="tx aid" id="t64" style="letter-spacing:0.396px">e5b96fff...</span><span class="dotw"><i></i></span><span class="tx dt" id="t66"><span style="letter-spacing:0.214px;word-spacing:-0.276px">Dec </span><span style="letter-spacing:-0.750px;word-spacing:0.703px">7, </span><span style="letter-spacing:0.375px;word-spacing:-0.438px">2025, </span><span style="letter-spacing:0.398px;word-spacing:-0.445px">02:43:57 </span><span style="letter-spacing:0.031px">PM</span></span></div></div><div class="ack m5"><svg class="" width="16" height="16" viewBox="0 0 24 24" fill="none" stroke="currentColor" stroke-width="2" stroke-linecap="round" stroke-linejoin="round" ><circle cx="12" cy="12" r="10"/><path d="m9 12 2 2 4-4"/></svg><span class="tx" id="t67" style="letter-spacing:0.541px">Acknowledge</span></div></div>
<div class="al a-r"><svg class="ic" width="20" height="20" viewBox="0 0 24 24" fill="none" stroke="currentColor" stroke-width="2" stroke-linecap="round" stroke-linejoin="round" ><path d="M20 13c0 5-3.5 7.500-7.660 8.950a1 1 0 0 1-.670-.010C7.500 20.500 4 18 4 13V6a1 1 0 0 1 1-1c2 0 4.500-1.200 6.240-2.720a1.170 1.170 0 0 1 1.520 0C14.510 3.810 17 5 19 5a1 1 0 0 1 1 1z"/><path d="M12 8v4"/><path d="M12 16h.01"/></svg><div class="body"><div class="trow"><span class="tx ttl" id="t69"><span style="letter-spacing:-0.004px;word-spacing:-0.527px">Unauthorized </span><span style="letter-spacing:-0.151px;word-spacing:-0.381px">Action </span><span style="letter-spacing:0.073px;word-spacing:-0.619px">Detected: </span><span style="letter-spacing:0.161px">violation-validate-1765143837</span></span><span class="tag"><svg class="" width="12" height="12" viewBox="0 0 24 24" fill="none" stroke="currentColor" stroke-width="2" stroke-linecap="round" stroke-linejoin="round" ><path d="M20 13c0 5-3.5 7.500-7.660 8.950a1 1 0 0 1-.670-.010C7.500 20.500 4 18 4 13V6a1 1 0 0 1 1-1c2 0 4.500-1.200 6.240-2.720a1.170 1.170 0 0 1 1.520 0C14.510 3.810 17 5 19 5a1 1 0 0 1 1 1z"/><path d="M12 8v4"/><path d="M12 16h.01"/></svg><span class="tx" id="t70"><span style="letter-spacing:0.055px;word-spacing:-0.461px">security </span><span style="letter-spacing:0.018px">breach</span></span></span></div><div class="desc"><span class="tx" id="t68"><span style="letter-spacing:0.356px;word-spacing:-0.419px">Agent </span><span style="letter-spacing:0.343px;word-spacing:-0.406px">'violation-validate-1765143837' </span><span style="letter-spacing:0.327px;word-spacing:-0.405px">attempted </span><span style="letter-spacing:0.347px;word-spacing:-0.410px">unauthorized </span><span style="letter-spacing:0.370px;word-spacing:-0.432px">action </span><span style="letter-spacing:0.327px;word-spacing:-0.389px">'admin:super_danger' </span><span style="letter-spacing:0.352px;word-spacing:-0.414px">on </span><span style="letter-spacing:0.334px;word-spacing:-0.397px">resource </span><span style="letter-spacing:1.461px;word-spacing:-1.524px">'' </span><span style="letter-spacing:0.504px;word-spacing:-0.567px">without </span><span style="letter-spacing:0.425px;word-spacing:-0.487px">proper </span><span style="letter-spacing:0.431px;word-spacing:-0.495px">capability. </span><span style="letter-spacing:0.250px;word-spacing:-0.313px">This </span><span style="letter-spacing:0.373px;word-spacing:-0.435px">action </span><span style="letter-spacing:0.401px;word-spacing:-0.464px">was </span><span style="letter-spacing:-0.487px;word-spacing:0.424px">DENIED. </span><span style="letter-spacing:0.112px;word-spacing:-0.175px">Grant </span><span style="letter-spacing:0.365px;word-spacing:-0.427px">the </span><span style="letter-spacing:0.324px;word-spacing:-0.387px">required </span><span style="letter-spacing:0.423px;word-spacing:-0.470px">capability </span><span style="letter-spacing:0.438px;word-spacing:-0.500px">to </span><span style="letter-spacing:0.315px;word-spacing:-0.378px">allow </span><span style="letter-spacing:0.328px;word-spacing:-0.391px">this </span><span style="letter-spacing:0.326px">action.</span></span></div><div class="meta"><span class="agent m5 bg"><span class="tx" id="t71" style="letter-spacing:0.412px">Agent</span></span><span class="tx aid" id="t72" style="letter-spacing:0.163px">violation-validate-1765143837...</span><span class="dotw"><i></i></span><span class="tx dt" id="t74"><span style="letter-spacing:0.214px;word-spacing:-0.276px">Dec </span><span style="letter-spacing:-0.750px;word-spacing:0.703px">7, </span><span style="letter-spacing:0.375px;word-spacing:-0.438px">2025, </span><span style="letter-spacing:0.398px;word-spacing:-0.445px">02:43:57 </span><span style="letter-spacing:0.031px">PM</span></span></div></div><div class="ack m5"><svg class="" width="16" height="16" viewBox="0 0 24 24" fill="none" stroke="currentColor" stroke-width="2" stroke-linecap="round" stroke-linejoin="round" ><circle cx="12" cy="12" r="10"/><path d="m9 12 2 2 4-4"/></svg><span class="tx" id="t75" style="letter-spacing:0.541px">Acknowledge</span></div></div>
<div class="al a-b"><svg class="ic" width="20" height="20" viewBox="0 0 24 24" fill="none" stroke="currentColor" stroke-width="2" stroke-linecap="round" stroke-linejoin="round" ><circle cx="12" cy="12" r="10"/><path d="M12 16v-4"/><path d="M12 8h.01"/></svg><div class="body"><div class="trow"><span class="tx ttl" id="t77"><span style="letter-spacing:0.365px;word-spacing:-0.896px">New </span><span style="letter-spacing:-0.238px;word-spacing:-0.293px">Resource </span><span style="letter-spacing:-0.054px;word-spacing:-0.492px">Access </span><span style="letter-spacing:-0.100px;word-spacing:-0.431px">Pattern </span><span style="letter-spacing:0.026px;word-spacing:-0.542px">for </span><span style="letter-spacing:0.235px">'violation-validate-1765143837'</span></span><span class="tag"><svg class="" width="12" height="12" viewBox="0 0 24 24" fill="none" stroke="currentColor" stroke-width="2" stroke-linecap="round" stroke-linejoin="round" ><circle cx="12" cy="12" r="10"/><path d="M12 16v-4"/><path d="M12 8h.01"/></svg><span class="tx" id="t78"><span style="letter-spacing:-0.161px;word-spacing:-0.246px">unusual </span><span style="letter-spacing:0.076px">activity</span></span></span></div><div class="desc"><span class="tx" id="t76"><span style="letter-spacing:0.356px;word-spacing:-0.419px">Agent </span><span style="letter-spacing:0.367px;word-spacing:-0.430px">accessed </span><span style="letter-spacing:0.334px;word-spacing:-0.397px">resource </span><span style="letter-spacing:0.586px;word-spacing:-0.649px">type </span><span style="letter-spacing:1.461px;word-spacing:-1.524px">'' </span><span style="letter-spacing:0.568px;word-spacing:-0.630px">for </span><span style="letter-spacing:0.359px;word-spacing:-0.422px">the </span><span style="letter-spacing:0.544px;word-spacing:-0.606px">first </span><span style="letter-spacing:0.328px;word-spacing:-0.391px">time </span><span style="letter-spacing:0.250px;word-spacing:-0.313px">in </span><span style="letter-spacing:-0.046px;word-spacing:-0.015px">7 </span><span style="letter-spacing:0.247px;word-spacing:-0.310px">days. </span><span style="letter-spacing:0.052px;word-spacing:-0.114px">Review </span><span style="letter-spacing:0.703px;word-spacing:-0.781px">if </span><span style="letter-spacing:0.332px;word-spacing:-0.395px">this </span><span style="letter-spacing:0.359px;word-spacing:-0.421px">access </span><span style="letter-spacing:0.219px;word-spacing:-0.297px">is </span><span style="letter-spacing:0.329px">authorized.</span></span></div><div class="meta"><span class="agent m5"><span class="tx" id="t79" style="letter-spacing:0.412px">Agent</span></span><span class="tx aid" id="t80" style="letter-spacing:0.396px">e5b96fff...</span><span class="dotw"><i></i></span><span class="tx dt" id="t82"><span style="letter-spacing:0.214px;word-spacing:-0.276px">Dec </span><span style="letter-spacing:-0.750px;word-spacing:0.703px">7, </span><span style="letter-spacing:0.375px;word-spacing:-0.438px">2025, </span><span style="letter-spacing:0.398px;word-spacing:-0.445px">02:43:57 </span><span style="letter-spacing:0.031px">PM</span></span></div></div><div class="ack m5"><svg class="" width="16" height="16" viewBox="0 0 24 24" fill="none" stroke="currentColor" stroke-width="2" stroke-linecap="round" stroke-linejoin="round" ><circle cx="12" cy="12" r="10"/><path d="m9 12 2 2 4-4"/></svg><span class="tx" id="t83" style="letter-spacing:0.541px">Acknowledge</span></div></div>
</div></div></div></body></html>
